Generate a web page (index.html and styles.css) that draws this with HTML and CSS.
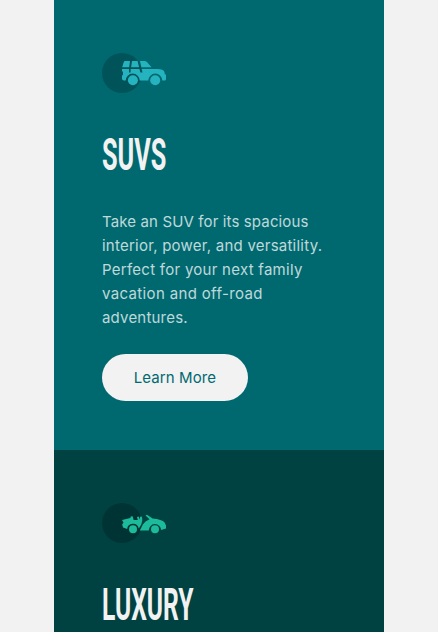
FILE: index.html
```html
<!DOCTYPE html>
<html lang="en">
<head>
<meta charset="utf-8">
<title>Cars</title>
<link rel="stylesheet" href="styles.css">
</head>
<body>
<main class="cards">
  <section class="card suvs">
    <svg class="icon" width="64" height="40" viewBox="0 0 64 40">
      <circle cx="20" cy="20" r="20" fill="#000" fill-opacity=".2"/>
      <g fill="#26b3c0">
        <path d="M23 8h5l-.8 6.200h-7l1.600-5.300Q22.200 8 23 8ZM30 8h5.600l1.500 6.200h-8ZM38 8H42q2 0 3.200 1.300L49.500 14.200H39.400ZM20 16h7v4H21v-1.600h-1ZM28.600 16h8.800l1.200 4H28.600ZM39.600 16H55q6.500 0 7.500 3l.3 2.500h1.200V26q0 1.600-1.500 1.600h-2.200a7 7 0 0 0-14 0H37.700a7 7 0 0 0-14 0H22q-2 0-2-2v-3.400h1v-2.700H40.600Z"/>
        <circle cx="30.900" cy="27.300" r="5"/><circle cx="53.200" cy="27.300" r="5"/>
      </g>
    </svg>
    <h2><span class="title-suvs">SUVS</span></h2>
    <p><span class="l1">Take an SUV for its spacious</span> <span class="l2">interior, power, and versatility.</span> <span class="l3">Perfect for your next family</span> <span class="l4">vacation and off-road</span> <span class="l5">adventures.</span></p>
    <a class="button" href="#"><span>Learn More</span></a>
  </section>
  <section class="card luxury">
    <svg class="icon" width="64" height="40" viewBox="0 0 64 40">
      <circle cx="20" cy="20" r="20" fill="#000" fill-opacity=".2"/>
      <g fill="#1bbb9b">
        <path d="M20 17 28.300 15 28.800 13.500 30.600 13.300 31.700 17H35.800L35 14 36.500 13.500 38 16.500V13.800l1.700-.3.600 2.200Q40.500 21 36.700 25.500A5.800 5.800 0 0 0 25.200 26L21 24.500 20.200 21.500 21.500 19.500Z"/>
        <path d="M43.500 12.500 45 11.800 50.700 15.600Q60 16.500 62.600 19.600L64 22.500V25.500L59.200 27a6.200 6.200 0 0 0-12.400.6H37.800L41 21.300 43.600 18.400 47.500 16.300Z"/>
        <circle cx="31" cy="26.300" r="4"/><circle cx="53" cy="26.300" r="4"/>
      </g>
    </svg>
    <h2><span class="title-luxury">LUXURY</span></h2>
  </section>
</main>
</body>
</html>
```
FILE: styles.css
```css
* { box-sizing: border-box; }
body {
  margin: 0;
  height: 632px;
  overflow: hidden;
  background: #f2f2f2;
  font-family: Inter, "Open Sans", sans-serif;
}
.cards { width: 330px; height: 632px; margin: 0 auto; overflow: hidden; }
.card { height: 450px; padding: 53px 48px 48px; }
.suvs { background: #006970; }
.luxury { height: 182px; background: #004241; }
.icon { display: block; }
h2 {
  margin: 36px 0 0;
  height: 52px;
  color: #f2f2f2;
  font: 700 44px/52px Roboto, sans-serif;
  white-space: nowrap;
}
h2 span { display: inline-block; transform-origin: left; }
.title-suvs { transform: scaleX(.575); }
.title-luxury { transform: scaleX(.56); }
p {
  margin: 29px 0 0;
  color: rgba(255, 255, 255, .75);
  font-size: 15px;
  line-height: 24px;
}
p span { display: block; white-space: nowrap; }
.l1 { letter-spacing: .13px; }
.l2 { letter-spacing: .24px; }
.l3 { letter-spacing: .27px; }
.l4 { letter-spacing: .35px; }
.l5 { letter-spacing: .2px; }
.button {
  display: flex;
  align-items: center;
  justify-content: center;
  width: 146px;
  height: 47px;
  margin-top: 24px;
  border-radius: 24px;
  background: #f2f2f2;
  color: #006970;
  font-size: 15px;
  letter-spacing: .1px;
  text-decoration: none;
}
```
